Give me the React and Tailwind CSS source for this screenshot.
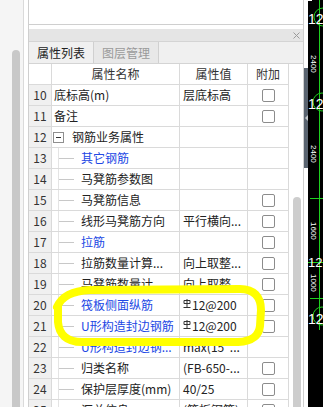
import React from 'react';

const rows = [
  { n: 10, name: '底标高(m)', value: '层底标高', check: true },
  { n: 11, name: '备注', value: '', check: true },
  { n: 12, name: '钢筋业务属性', group: true },
  { n: 13, name: '其它钢筋', child: true, blue: true },
  { n: 14, name: '马凳筋参数图', child: true },
  { n: 15, name: '马凳筋信息', child: true, check: true },
  { n: 16, name: '线形马凳筋方向', value: '平行横向...', child: true, check: true },
  { n: 17, name: '拉筋', child: true, blue: true, check: true },
  { n: 18, name: '拉筋数量计算...', value: '向上取整...', child: true, check: true },
  { n: 19, name: '马凳筋数量计...', value: '向上取整...', child: true, check: true },
  { n: 20, name: '筏板侧面纵筋', bar: '12@200', child: true, blue: true, check: true },
  { n: 21, name: 'U形构造封边钢筋', bar: '12@200', child: true, blue: true, check: true },
  { n: 22, name: 'U形构造封边钢...', value: 'max(15*...', child: true, blue: true },
  { n: 23, name: '归类名称', value: '(FB-650-...', child: true, check: true },
  { n: 24, name: '保护层厚度(mm)', value: '40/25', child: true, check: true },
  { n: 25, name: '汇总信息', value: '(筏板钢筋)', child: true, check: true },
];

// grade III rebar mark
const BarMark = () => (
  <svg width="8" height="9" viewBox="0 0 8 9" className="self-start mt-[4px] shrink-0">
    <path d="M1 1.5 H7 V4.5 H1 Z M4 0 V8 M0.5 8.5 H7.5" stroke="#333" strokeWidth="1" fill="none" />
  </svg>
);

const Row = ({ r }) => (
  <div className="grid grid-cols-[23px_128px_68px_40px] h-[21px] border-b border-[#dadada] text-[12px] leading-[20px]">
    <div className="border-r border-[#dadada] bg-[#f0f0f0] text-center text-[#333]">{r.n}</div>
    <div className="border-r border-[#dadada] flex items-center overflow-hidden whitespace-nowrap">
      {r.group ? (
        <>
          <span className="ml-[1px] w-[11px] h-[11px] border border-[#8f8f8f] flex items-center justify-center shrink-0">
            <span className="w-[5px] h-px bg-[#333]" />
          </span>
          <span className="ml-[8px] text-[#222]">{r.name}</span>
        </>
      ) : r.child ? (
        <>
          <span className="ml-[6px] w-px self-stretch bg-[#e4e4e4] shrink-0" />
          <span className="w-[15px] h-px bg-[#c8c8c8] shrink-0" />
          <span className={`ml-[7px] ${r.blue ? 'text-[#2147e4]' : 'text-[#222]'}`}>{r.name}</span>
        </>
      ) : (
        <span className="pl-[2px] text-[#222]">{r.name}</span>
      )}
    </div>
    <div className="border-r border-[#dadada] flex items-center pl-[3px] overflow-hidden whitespace-nowrap text-[#222]">
      {r.bar ? (
        <>
          <BarMark />
          <span className="ml-[1px]">{r.bar}</span>
        </>
      ) : (
        r.value
      )}
    </div>
    <div className="flex items-center justify-center">
      {r.check && <span className="w-[13px] h-[13px] rounded-[2px] border border-[#8c8c8c] bg-white" />}
    </div>
  </div>
);

const CadStrip = () => (
  <svg width="15" height="407" viewBox="0 0 15 407" className="block">
    <rect width="15" height="407" fill="#000" />
    <g stroke="#1fd11f" strokeWidth="1" fill="none">
      <line x1="11.5" y1="0" x2="11.5" y2="330" />
      <circle cx="15" cy="17" r="9" />
      <circle cx="14" cy="102" r="9" />
      <circle cx="14" cy="316" r="9" />
      <line x1="2" y1="198.5" x2="15" y2="198.5" />
      <line x1="0" y1="262.5" x2="15" y2="262.5" />
      <line x1="2" y1="298.5" x2="15" y2="298.5" />
    </g>
    <g fill="#fff" fontFamily="Liberation Sans, sans-serif">
      <rect x="0" y="0" width="4" height="1" />
      <text x="0" y="24" fontSize="14">12</text>
      <text x="0" y="109" fontSize="14">12</text>
      <text x="0" y="267" fontSize="13">12</text>
      <text x="0" y="324" fontSize="14">12</text>
      <text fontSize="8" transform="translate(3 55) rotate(90)">2400</text>
      <text fontSize="8" transform="translate(3 145) rotate(90)">2400</text>
      <text fontSize="8" transform="translate(3 222) rotate(90)">1600</text>
      <text fontSize="8" transform="translate(3 274) rotate(90)">1000</text>
    </g>
  </svg>
);

export default function App() {
  return (
    <div className="relative w-[323px] h-[407px] flex overflow-hidden bg-white font-['Noto_Sans_CJK_SC','Liberation_Sans',sans-serif]">
      {/* outer scroll gutter */}
      <div className="w-[28px] shrink-0 flex">
        <div className="w-[23px] bg-[#f5f5f5] flex flex-col pt-[50px] pl-[12px]">
          <div className="w-[8px] flex-1 rounded-t-full bg-[#c8c8c8]" />
        </div>
        <div className="w-px bg-[#dadada]" />
        <div className="w-[4px] bg-white" />
      </div>

      {/* property panel */}
      <div className="w-[276px] shrink-0 flex flex-col border-x border-[#cfcfcf]">
        <div className="h-[25px] bg-white border-b border-[#cfcfcf]" />
        <div className="h-[4px] bg-white" />
        <div className="h-[12px] bg-[#e5e5e5] flex items-center justify-end pr-[3px]">
          <svg width="7" height="7" viewBox="0 0 7 7">
            <path d="M0.5 0.5 L6.5 6.5 M6.5 0.5 L0.5 6.5" stroke="#9a9a9a" strokeWidth="1" />
          </svg>
        </div>
        <div className="h-[23px] flex bg-[#f0f0f0] border-y border-[#d4d4d4] text-[12px]">
          <div className="w-[65px] border-r border-[#d0d0d0] flex items-center justify-center text-[#222]">属性列表</div>
          <div className="w-[65px] border-r border-[#d0d0d0] bg-[#e8e8e8] flex items-center justify-center text-[#9a9a9a]">图层管理</div>
        </div>
        <div className="flex-1 flex min-h-0 overflow-hidden">
          <div className="flex flex-col">
            <div className="grid grid-cols-[23px_128px_68px_40px] h-[21px] border-b border-[#dadada] text-[12px] leading-[20px] text-[#333]">
              <div className="border-r border-[#dadada]" />
              <div className="border-r border-[#dadada] text-center">属性名称</div>
              <div className="border-r border-[#dadada] text-center">属性值</div>
              <div className="text-center">附加</div>
            </div>
            {rows.map((r) => (
              <Row key={r.n} r={r} />
            ))}
          </div>
          <div className="w-[15px] flex flex-col pt-[133px] pl-[4px] border-l border-[#dadada]">
            <div className="w-[8px] flex-1 rounded-t-full bg-[#cdcdcd]" />
          </div>
        </div>
      </div>

      {/* collapse splitter */}
      <div className="w-[4px] shrink-0 flex flex-col bg-white">
        <div className="h-[68px]" />
        <div className="h-[100px] bg-[#5a6470] flex items-center justify-center">
          <span className="w-0 h-0 border-y-[3px] border-y-transparent border-r-[3px] border-r-[#c4c8cc]" />
        </div>
      </div>

      {/* drawing canvas */}
      <div className="w-[15px] shrink-0">
        <CadStrip />
      </div>

      {/* yellow hand-drawn highlight */}
      <svg className="absolute inset-0 pointer-events-none" width="323" height="407" viewBox="0 0 323 407">
        <path
          d="M57 307 C62 296 72 291 90 290 L240 289 C254 289 261 297 261 310 L260 326 C259 336 252 341 238 342 L82 342 C66 342 59 334 58 322 L58 306"
          stroke="#ffff00"
          strokeWidth="8"
          fill="none"
          strokeLinecap="round"
          strokeLinejoin="round"
        />
      </svg>
    </div>
  );
}
